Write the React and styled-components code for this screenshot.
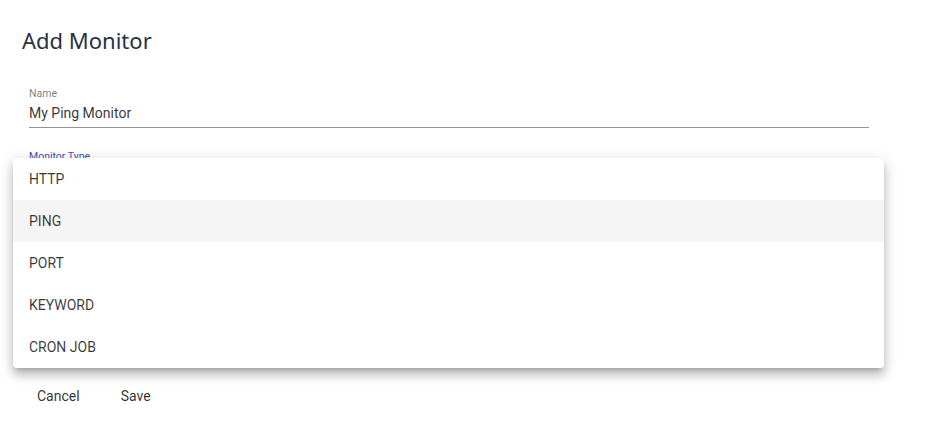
import React from "react";
import styled, { createGlobalStyle } from "styled-components";

const GlobalStyle = createGlobalStyle`
  body {
    margin: 0;
    background: #fff;
    font-family: Roboto, "Liberation Sans", sans-serif;
  }
`;

const Page = styled.div`
  padding: 20px 21px;
`;

const Title = styled.h2`
  margin: 0 0 0 1px;
  font-family: "Noto Sans", "Open Sans", sans-serif;
  font-weight: 400;
  font-size: 22px;
  line-height: 40px;
  color: #2a3048;
`;

const Form = styled.form`
  display: flex;
  flex-direction: column;
`;

const Field = styled.div`
  position: relative;
  display: flex;
  flex-direction: column;
  width: 840px;
  margin: ${(p) => p.$top || 23}px 0 0 8px;
`;

const Label = styled.label`
  font-size: 10.5px;
  line-height: 12px;
  color: ${(p) => (p.$focused ? "#3f51b5" : "rgba(0, 0, 0, 0.54)")};
`;

const Input = styled.input`
  border: none;
  border-bottom: 1px solid rgba(0, 0, 0, 0.42);
  padding: 4px 0;
  font-family: Roboto, "Liberation Sans", sans-serif;
  font-size: 14px;
  line-height: 19px;
  height: 19px;
  color: rgba(0, 0, 0, 0.8);
  outline: none;
  background: transparent;
`;

const SelectBox = styled.div`
  height: 26px;
  border-bottom: 2px solid #3f51b5;
`;

const Menu = styled.ul`
  position: absolute;
  top: 7px;
  left: -16px;
  width: 871px;
  margin: 0;
  padding: 0;
  list-style: none;
  background: #fff;
  border-radius: 4px;
  box-shadow: 0 5px 5px -3px rgba(0, 0, 0, 0.2), 0 8px 10px 1px rgba(0, 0, 0, 0.14),
    0 3px 14px 2px rgba(0, 0, 0, 0.12);
  z-index: 10;
`;

const MenuItem = styled.li`
  height: 42px;
  display: flex;
  align-items: center;
  padding: 0 16px;
  font-size: 14px;
  color: rgba(0, 0, 0, 0.78);
  background: ${(p) => (p.$selected ? "#f5f5f5" : "transparent")};
`;

const Actions = styled.div`
  display: flex;
  gap: 8px;
  margin-top: 187px;
`;

const TextButton = styled.button`
  min-width: 64px;
  height: 36px;
  padding: 0 16px;
  border: none;
  border-radius: 4px;
  background: transparent;
  font-family: Roboto, "Liberation Sans", sans-serif;
  font-size: 14px;
  color: rgba(0, 0, 0, 0.82);
  cursor: pointer;
`;

const types = ["HTTP", "PING", "PORT", "KEYWORD", "CRON JOB"];

export default function App() {
  return (
    <>
      <GlobalStyle />
      <Page>
        <Title>Add Monitor</Title>
        <Form onSubmit={(e) => e.preventDefault()}>
          <Field $top={28}>
            <Label>Name</Label>
            <Input defaultValue="My Ping Monitor" />
          </Field>
          <Field>
            <Label $focused>Monitor Type</Label>
            <SelectBox />
            <Menu>
              {types.map((t) => (
                <MenuItem key={t} $selected={t === "PING"}>
                  {t}
                </MenuItem>
              ))}
            </Menu>
          </Field>
          <Actions>
            <TextButton type="button">Cancel</TextButton>
            <TextButton type="submit">Save</TextButton>
          </Actions>
        </Form>
      </Page>
    </>
  );
}
